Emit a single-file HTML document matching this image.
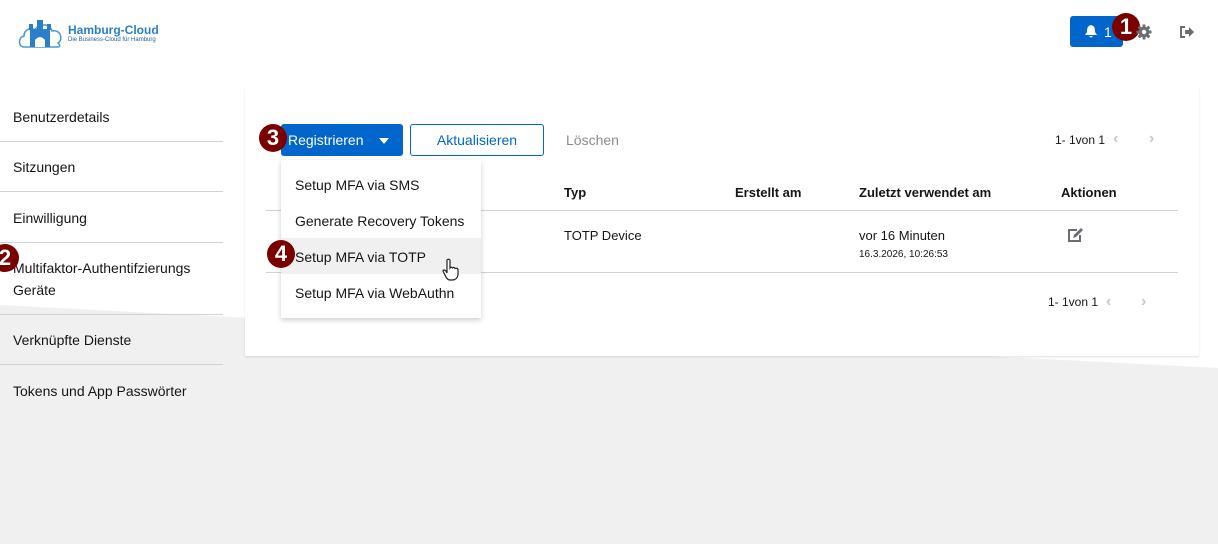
<!DOCTYPE html>
<html><head><meta charset="utf-8"><style>
*{margin:0;padding:0;box-sizing:border-box}
body{width:1218px;height:544px;position:relative;overflow:hidden;background:#fff;font-family:"Liberation Sans",sans-serif;color:#151515;font-size:14px}
.a{position:absolute;white-space:nowrap}
.grey{position:absolute;left:0;top:0;width:1218px;height:544px;background:#f0f0f0;clip-path:polygon(0 305px,1218px 368px,1218px 544px,0 544px)}
.sep{position:absolute;left:0;width:223px;height:1px;background:#d2d2d2}
.side{position:absolute;left:13px;font-size:14px;color:#151515}
.panel{position:absolute;left:245px;top:88px;width:954px;height:268px;background:#fff;box-shadow:0 1px 2px rgba(0,0,0,.12)}
.badge{position:absolute;width:28px;height:28px;border-radius:50%;background:#7a0000;color:#fff;font-weight:bold;font-size:22px;text-align:center;line-height:28px}
.th{font-weight:bold;font-size:13px}
.menu{position:absolute;left:281px;top:160px;width:200px;height:158px;background:#fff;box-shadow:0 2px 5px rgba(0,0,0,.2)}
.mi{position:absolute;left:14px;font-size:14px}
.chev{color:#c7c7c7;font-size:16px;font-weight:bold}
</style></head><body>
<div class="grey"></div>
<svg class="a" style="left:18px;top:15px" width="46" height="34" viewBox="0 0 46 34">
<path d="M6 32 C0 32 0 22 6 21 C6 14 14 12 17 15 C20 8 32 8 34 16 C42 14 46 24 40 28 C44 32 40 32 38 32Z" fill="none" stroke="#4a98d6" stroke-width="1.5"/>
<rect x="12" y="14" width="20" height="18" fill="#2a7fc8"/>
<rect x="19" y="5" width="6" height="10" fill="#2a7fc8"/>
<rect x="11" y="9" width="4" height="6" fill="#2a7fc8"/><rect x="29" y="9" width="4" height="6" fill="#2a7fc8"/>
<path d="M17 32 V25 Q22 19 27 25 V32Z" fill="#fff"/>
</svg>
<div class="a" style="left:68px;top:23px;font-size:12px;font-weight:bold;color:#2a7fc8">Hamburg-Cloud</div>
<div class="a" style="left:68px;top:37px;font-size:6px;color:#2a5f9a">Die Business-Cloud für Hamburg</div>
<div class="a" style="left:1070px;top:16px;width:53px;height:31px;background:#0066cc;border-radius:3px"></div>
<svg class="a" style="left:1084px;top:24px" width="14" height="15" viewBox="0 0 14 15"><path d="M7 1 C3 2 3 5 3 8 L1 11 H13 L11 8 C11 5 11 2 7 1Z M5 12 Q7 15 9 12Z" fill="#fff"/></svg>
<div class="a" style="left:1104px;top:24px;color:#fff;font-size:14px">1</div>
<div class="badge" style="left:1112px;top:13px">1</div>
<svg class="a" style="left:1136px;top:24px" width="16" height="16" viewBox="0 0 16 16"><g fill="#6a6e73"><rect x="6.5" y="0.5" width="3" height="15" rx="0.5"/><rect x="6.5" y="0.5" width="3" height="15" rx="0.5" transform="rotate(45 8 8)"/><rect x="6.5" y="0.5" width="3" height="15" rx="0.5" transform="rotate(90 8 8)"/><rect x="6.5" y="0.5" width="3" height="15" rx="0.5" transform="rotate(135 8 8)"/><circle cx="8" cy="8" r="5.3"/></g><circle cx="8" cy="8" r="2.2" fill="#fff"/></svg>
<svg class="a" style="left:1180px;top:26px" width="15" height="12" viewBox="0 0 15 12"><path d="M5 1 H1 V11 H5" fill="none" stroke="#6a6e73" stroke-width="2"/><path d="M5 4 H9 V1 L14 6 L9 11 V8 H5Z" fill="#6a6e73"/></svg>
<div class="side" style="top:109px">Benutzerdetails</div><div class="sep" style="top:141px"></div>
<div class="side" style="top:159px">Sitzungen</div><div class="sep" style="top:191px"></div>
<div class="side" style="top:210px">Einwilligung</div><div class="sep" style="top:242px"></div>
<div class="side" style="top:260px">Multifaktor-Authentifzierungs</div>
<div class="side" style="top:282px">Geräte</div><div class="sep" style="top:314px"></div>
<div class="side" style="top:332px">Verknüpfte Dienste</div><div class="sep" style="top:364px"></div>
<div class="side" style="top:383px">Tokens und App Passwörter</div>
<div class="badge" style="left:-9px;top:244px">2</div>
<div class="panel"></div>
<div class="a" style="left:281px;top:124px;width:122px;height:32px;background:#0066cc;border-radius:3px"></div>
<div class="a" style="left:288px;top:132px;color:#fff;font-size:14px">Registrieren</div>
<div class="a" style="left:379px;top:138px;width:0;height:0;border-left:5px solid transparent;border-right:5px solid transparent;border-top:6px solid #fff"></div>
<div class="badge" style="left:259px;top:124px">3</div>
<div class="a" style="left:410px;top:124px;width:134px;height:32px;border:1px solid #0066cc;border-radius:3px;color:#0066cc;text-align:center;line-height:30px">Aktualisieren</div>
<div class="a" style="left:566px;top:132px;color:#8a8d90">Löschen</div>
<div class="a" style="left:1055px;top:133px;font-size:12px">1- 1von 1</div>
<div class="a chev" style="left:1113px;top:130px">‹</div>
<div class="a chev" style="left:1149px;top:130px">›</div>
<div class="a th" style="left:564px;top:185px">Typ</div>
<div class="a th" style="left:735px;top:185px">Erstellt am</div>
<div class="a th" style="left:859px;top:185px">Zuletzt verwendet am</div>
<div class="a th" style="left:1061px;top:185px">Aktionen</div>
<div class="a" style="left:266px;top:210px;width:912px;height:1px;background:#d2d2d2"></div>
<div class="a" style="left:564px;top:228px;font-size:13px">TOTP Device</div>
<div class="a" style="left:859px;top:228px;font-size:13px">vor 16 Minuten</div>
<div class="a" style="left:859px;top:249px;font-size:10px">16.3.2026, 10:26:53</div>
<svg class="a" style="left:1068px;top:228px" width="16" height="14" viewBox="0 0 16 14"><path d="M9 2 H1 V13 H12 V7" fill="none" stroke="#6a6e73" stroke-width="2"/><path d="M5 10 L6 7 L13 0 L15 2 L8 9Z" fill="#6a6e73"/></svg>
<div class="a" style="left:266px;top:272px;width:912px;height:1px;background:#d2d2d2"></div>
<div class="a" style="left:1048px;top:295px;font-size:12px">1- 1von 1</div>
<div class="a chev" style="left:1106px;top:293px">‹</div>
<div class="a chev" style="left:1141px;top:293px">›</div>
<div class="menu">
<div class="mi" style="top:17px">Setup MFA via SMS</div>
<div class="mi" style="top:53px">Generate Recovery Tokens</div>
<div class="a" style="left:0;top:78px;width:200px;height:36px;background:#f0f0f0"></div>
<div class="mi" style="top:89px">Setup MFA via TOTP</div>
<div class="mi" style="top:125px">Setup MFA via WebAuthn</div>
</div>
<div class="badge" style="left:267px;top:240px">4</div>
<svg class="a" style="left:442px;top:258px" width="18" height="24" viewBox="0 0 18 24"><path d="M5 2 Q6.5 0.5 8 2 V10 Q9 8.5 10.5 10 Q12 8.5 13 10.5 Q15 9.5 16 11.5 V17 Q15 22 10 22 H8 Q5 22 3 17 L1 13 Q1.5 11 4 13 L5 15Z" fill="#fff" stroke="#222" stroke-width="1.2"/></svg>
</body></html>
